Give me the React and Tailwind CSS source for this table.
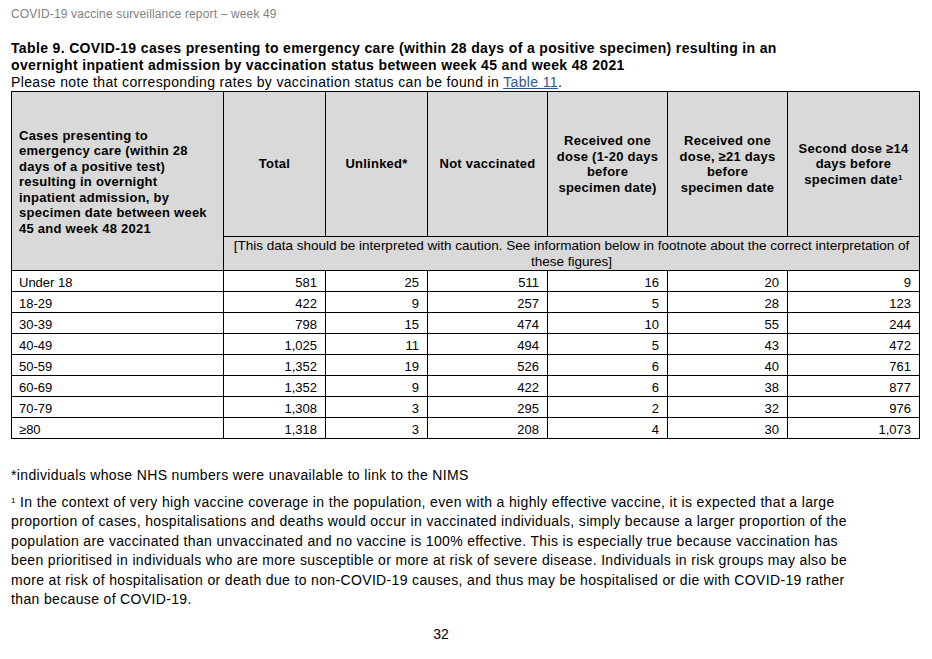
import React from "react";

const rows = [
  ["Under 18", "581", "25", "511", "16", "20", "9"],
  ["18-29", "422", "9", "257", "5", "28", "123"],
  ["30-39", "798", "15", "474", "10", "55", "244"],
  ["40-49", "1,025", "11", "494", "5", "43", "472"],
  ["50-59", "1,352", "19", "526", "6", "40", "761"],
  ["60-69", "1,352", "9", "422", "6", "38", "877"],
  ["70-79", "1,308", "3", "295", "2", "32", "976"],
  ["≥80", "1,318", "3", "208", "4", "30", "1,073"],
];

export default function App() {
  return (
    <div className="w-[932px] h-[659px] bg-white text-black font-['Liberation_Sans',Arial,sans-serif]">
      <div className="pl-[11px] pt-[6px] text-[12px] tracking-[0.15px] leading-[16px] text-[#7f7f7f]">
        COVID-19 vaccine surveillance report – week 49
      </div>

      <div className="pl-[11px] pt-[18px] text-[14px] tracking-[0.35px] leading-[17px] font-bold">
        Table 9. COVID-19 cases presenting to emergency care (within 28 days of a positive specimen) resulting in an
        <br />
        overnight inpatient admission by vaccination status between week 45 and week 48 2021
      </div>
      <div className="pl-[11px] text-[14px] tracking-[0.35px] leading-[17px]">
        Please note that corresponding rates by vaccination status can be found in{" "}
        <span className="text-[#2f5597] underline">Table 11</span>.
      </div>

      <table className="ml-[11px] w-[908px] table-fixed border-collapse border border-black text-[13px]">
        <colgroup>
          <col className="w-[212px]" />
          <col className="w-[102px]" />
          <col className="w-[102px]" />
          <col className="w-[120px]" />
          <col className="w-[120px]" />
          <col className="w-[120px]" />
          <col className="w-[132px]" />
        </colgroup>
        <thead>
          <tr className="h-[145px] bg-[#d9d9d9] font-bold text-[13px] tracking-[0.25px] leading-[15.5px]">
            <th rowSpan={2} className="border border-black text-left align-middle px-[7px] pt-[2px]">
              Cases presenting to
              <br />
              emergency care (within 28
              <br />
              days of a positive test)
              <br />
              resulting in overnight
              <br />
              inpatient admission, by
              <br />
              specimen date between week
              <br />
              45 and week 48 2021
            </th>
            <th className="border border-black">Total</th>
            <th className="border border-black">Unlinked*</th>
            <th className="border border-black">Not vaccinated</th>
            <th className="border border-black">
              Received one
              <br />
              dose (1-20 days
              <br />
              before
              <br />
              specimen date)
            </th>
            <th className="border border-black">
              Received one
              <br />
              dose, ≥21 days
              <br />
              before
              <br />
              specimen date
            </th>
            <th className="border border-black">
              Second dose ≥14
              <br />
              days before
              <br />
              specimen date<sup className="text-[8px]">1</sup>
            </th>
          </tr>
          <tr className="h-[34px] bg-[#d9d9d9]">
            <td colSpan={6} className="border border-black text-center text-[13.5px] leading-[16px] px-[4px]">
              [This data should be interpreted with caution. See information below in footnote about the correct interpretation of
              <br />
              these figures]
            </td>
          </tr>
        </thead>
        <tbody>
          {rows.map((r) => (
            <tr key={r[0]} className="h-[21px]">
              {r.map((c, i) => (
                <td
                  key={i}
                  className={`border border-black leading-[15px] pt-[2px] ${i === 0 ? "text-left pl-[7px]" : "text-right pr-[8px]"}`}
                >
                  {c}
                </td>
              ))}
            </tr>
          ))}
        </tbody>
      </table>

      <div className="pl-[11px] pt-[27px] text-[14px] tracking-[0.35px] leading-[19.5px]">
        *individuals whose NHS numbers were unavailable to link to the NIMS
      </div>
      <div className="pl-[11px] pt-[7px] text-[14px] tracking-[0.35px] leading-[19.5px]">
        <sup className="text-[8px]">1</sup> In the context of very high vaccine coverage in the population, even with a highly effective vaccine, it is expected that a large
        <br />
        proportion of cases, hospitalisations and deaths would occur in vaccinated individuals, simply because a larger proportion of the
        <br />
        population are vaccinated than unvaccinated and no vaccine is 100% effective. This is especially true because vaccination has
        <br />
        been prioritised in individuals who are more susceptible or more at risk of severe disease. Individuals in risk groups may also be
        <br />
        more at risk of hospitalisation or death due to non-COVID-19 causes, and thus may be hospitalised or die with COVID-19 rather
        <br />
        than because of COVID-19.
      </div>
      <div className="pt-[16px] pr-[50px] text-center text-[14px] leading-[16px]">32</div>
    </div>
  );
}
